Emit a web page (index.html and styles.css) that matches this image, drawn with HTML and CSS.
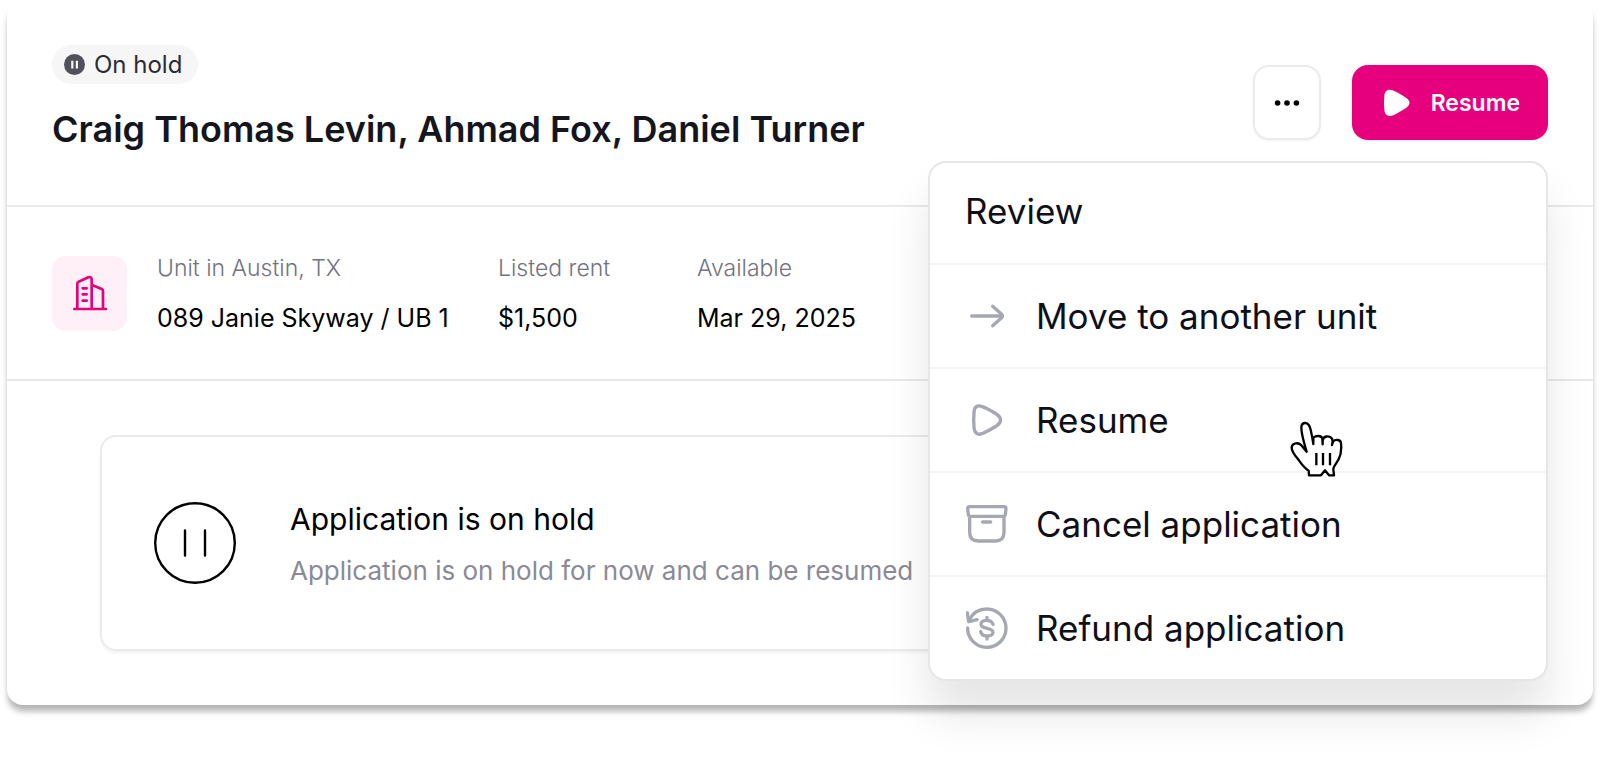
FILE: index.html
```
<!DOCTYPE html>
<html lang="en">
<head>
<meta charset="utf-8">
<meta name="viewport" content="width=device-width, initial-scale=1">
<title>Application</title>
<link rel="stylesheet" href="styles.css">
</head>
<body>
<main class="card">
  <header class="header">
    <div class="heading">
      <span class="badge">
        <svg class="badge-icon" viewBox="0 0 21 21" aria-hidden="true"><circle cx="10.5" cy="10.5" r="10.5" fill="#51515c"/><path d="M8.3 6.8v7.6M12.9 6.8v7.6" stroke="#f6f6f6" stroke-width="2.2"/></svg>
        On hold
      </span>
      <h1 class="title">Craig Thomas Levin, Ahmad Fox, Daniel Turner</h1>
    </div>
    <div class="actions">
      <button class="more" type="button" aria-label="More actions" aria-expanded="true">
        <svg class="more-icon" viewBox="0 0 26 6" aria-hidden="true"><circle cx="3.6" cy="3" r="2.8"/><circle cx="13" cy="3" r="2.8"/><circle cx="22.4" cy="3" r="2.8"/></svg>
      </button>
      <button class="resume" type="button">
        <svg class="resume-icon" viewBox="458 147 84 84" aria-hidden="true"><path d="M462 170C462 152 473 146 487 151C499 156 514 165 527 173C541 182 541 195 527 204C514 212 501 220 489 226C474 232 462 225 462 207Q460 188 462 170Z" fill="#fff"/></svg>
        Resume
      </button>
      <div class="menu">
        <div class="menu-title">Review</div>
        <button class="menu-item" type="button">
          <svg class="menu-icon" viewBox="197 465 126 126" aria-hidden="true"><path d="M214 528H306M277 499L303 522Q310 528 303 534L277 557"/></svg>
          Move to another unit
        </button>
        <button class="menu-item" type="button">
          <svg class="menu-icon" viewBox="196 776 126 126" aria-hidden="true"><path d="M220 818C220 799 230 793 245 799C258 804 274 813 287 821C304 832 304 846 287 857C274 865 260 873 247 879C231 886 221 879 220 860Q218 839 220 818Z"/></svg>
          Resume
        </button>
        <button class="menu-item" type="button">
          <svg class="menu-icon" viewBox="167 189 126 126" aria-hidden="true"><path d="M178 200H281Q287 200 287 206L285 224Q284 229 279 229H180Q175 229 174 224L172 206Q172 200 178 200ZM178 229V277Q178 303 204 303H255Q281 303 281 277V229M217 246H241"/></svg>
          Cancel application
        </button>
        <button class="menu-item" type="button">
          <svg class="menu-icon" viewBox="167 501 126 126" aria-hidden="true"><path d="M172 564A57.500 57.500 0 1 0 229.500 507C206 507 188 519 178 537M171 519L175 545L200 539M248 553C245 544 237 541 229 541C219 541 212 546 212 553C212 561 220 563 230 565C240 567 248 570 248 577C248 584 240 588 230 588C220 588 213 584 211 575M230 532V541M230 588V597"/></svg>
          Refund application
        </button>
        <svg class="pointer" viewBox="90 64 159 171" aria-hidden="true"><path d="M140 156C134 135 124 105 124 84C124 73 130 70 136 70C145 70 149 78 152 90C155 103 158 118 160 133L160 114C168 107 183 107 187 116L188 134L188 122C189 109 209 106 216 117C219 123 217 132 216 136L219 126C226 118 243 119 243 131C245 150 240 171 236 179C231 189 219 200 220 210L222 227H207L195 212L183 227H147L146 213C130 204 121 187 112 176C104 166 95 152 95 144C96 129 115 127 124 137Z"/><path d="M169 160V197M189 160V197M210 160V197"/></svg>
      </div>
    </div>
  </header>

  <section class="unit">
    <span class="unit-tile">
      <svg class="unit-icon" viewBox="215 138 108 108" aria-hidden="true"><path d="M222 240H317M231 240V164Q231 160 235 158L264 145Q274 142 274 151V240M275 168L304 180Q308 182 308 186V240M247 178H259M247 196H259M247 215H259"/></svg>
    </span>
    <dl class="facts">
      <div class="fact"><dt class="label">Unit in Austin, TX</dt><dd class="value">089 Janie Skyway / UB 1</dd></div>
      <div class="fact"><dt class="label">Listed rent</dt><dd class="value">$1,500</dd></div>
      <div class="fact"><dt class="label">Available</dt><dd class="value">Mar 29, 2025</dd></div>
    </dl>
  </section>

  <section class="body">
    <div class="notice">
      <svg class="notice-icon" viewBox="0 0 82 82" aria-hidden="true"><circle cx="41" cy="41" r="39.800"/><path d="M31 28.500V53.500M51 28.500V53.500"/></svg>
      <div class="notice-text">
        <h2 class="notice-title">Application is on hold</h2>
        <p class="notice-sub">Application is on hold for now and can be resumed</p>
      </div>
    </div>
  </section>
</main>
</body>
</html>
```
FILE: styles.css
```
* {
  box-sizing: border-box;
}

body {
  min-height: 100vh;
  margin: 0;
  background: #fff;
  color: #15151d;
  font-family: Inter, "Liberation Sans", sans-serif;
}

button {
  font: inherit;
  color: inherit;
  cursor: pointer;
}

h1, h2, p, dl, dd {
  margin: 0;
}

.card {
  margin: 0 7px;
  border-radius: 16px;
  background: #fff;
  box-shadow: 0 7px 6px -1px rgba(0, 0, 0, 0.28), 0 8px 4px rgba(0, 0, 0, 0.03);
}

.header {
  display: flex;
  align-items: center;
  justify-content: space-between;
  padding: 45px;
  border-bottom: 2px solid #e9e9ea;
}

.heading {
  display: flex;
  flex-direction: column;
  align-items: flex-start;
  gap: 14px;
}

.badge {
  display: inline-flex;
  align-items: center;
  gap: 9px;
  padding: 0 16px 0 12px;
  border-radius: 20px;
  background: #f6f6f6;
  color: #2b2b36;
  font-size: 24px;
  line-height: 39px;
}

.badge-icon {
  width: 21px;
  height: 21px;
}

.title {
  font-size: 36px;
  font-weight: 600;
  line-height: 62px;
}

.actions {
  position: relative;
  display: flex;
  gap: 31px;
}

.more {
  display: flex;
  align-items: center;
  justify-content: center;
  width: 68px;
  height: 75px;
  padding: 0;
  border: 2px solid #ebebec;
  border-radius: 16px;
  background: #fff;
  box-shadow: 0 1px 3px rgba(0, 0, 0, 0.05);
}

.more-icon {
  width: 26px;
  height: 6px;
}

.resume {
  display: flex;
  align-items: center;
  gap: 20px;
  height: 75px;
  padding: 0 28px 0 31px;
  border: 0;
  border-radius: 16px;
  background: #e6007e;
  box-shadow: 0 1px 3px rgba(0, 0, 0, 0.08);
  color: #fff;
  font-size: 23px;
  font-weight: 600;
}

.resume-icon {
  width: 28px;
  height: 28px;
}

.menu {
  position: absolute;
  top: calc(100% + 21px);
  right: 0;
  width: 620px;
  border: 2px solid #e6e6e7;
  border-radius: 18px;
  background: #fff;
  box-shadow: 0 34px 44px rgba(0, 0, 0, 0.1);
  color: #0f0f17;
  font-size: 35px;
}

.menu-title {
  padding: 0 35px 4px;
  line-height: 96px;
}

.menu-item {
  display: flex;
  align-items: center;
  gap: 28px;
  width: 100%;
  height: 104px;
  padding: 0 36px;
  border: 0;
  border-top: 2px solid #f5f5f6;
  background: none;
  text-align: left;
}

.menu-icon {
  width: 42px;
  height: 42px;
  fill: none;
  stroke: #a5a7b2;
  stroke-width: 10;
  stroke-linecap: round;
  stroke-linejoin: round;
}

.pointer {
  position: absolute;
  top: 258px;
  left: 360px;
  width: 53px;
  height: 57px;
  fill: #fff;
  stroke: #000;
  stroke-width: 7;
  stroke-linejoin: round;
}

.unit {
  display: flex;
  align-items: center;
  gap: 30px;
  padding: 36px 45px;
  border-bottom: 2px solid #e9e9ea;
}

.unit-tile {
  display: flex;
  align-items: center;
  justify-content: center;
  width: 75px;
  height: 75px;
  border-radius: 14px;
  background: #fff0f7;
}

.unit-icon {
  width: 36px;
  height: 36px;
  fill: none;
  stroke: #e6007e;
  stroke-width: 8;
  stroke-linecap: round;
  stroke-linejoin: round;
}

.facts {
  display: grid;
  grid-template-columns: 341px 199px auto;
}

.label {
  color: #737380;
  font-size: 23px;
  font-weight: 300;
  line-height: 50px;
}

.value {
  color: #000;
  font-size: 25px;
  line-height: 50px;
}

.body {
  padding: 54px 93px;
}

.notice {
  display: flex;
  align-items: center;
  gap: 54px;
  padding: 52px;
  border: 2px solid #ebebec;
  border-radius: 16px;
  box-shadow: 0 2px 3px rgba(0, 0, 0, 0.05);
}

.notice-icon {
  width: 82px;
  height: 82px;
  fill: none;
  stroke: #000;
  stroke-width: 2.4;
  stroke-linecap: round;
}

.notice-text {
  padding-top: 4px;
}

.notice-title {
  color: #000;
  font-size: 30px;
  font-weight: 400;
  line-height: 52px;
}

.notice-sub {
  color: #8a8a96;
  font-size: 26px;
  line-height: 52px;
}
```
